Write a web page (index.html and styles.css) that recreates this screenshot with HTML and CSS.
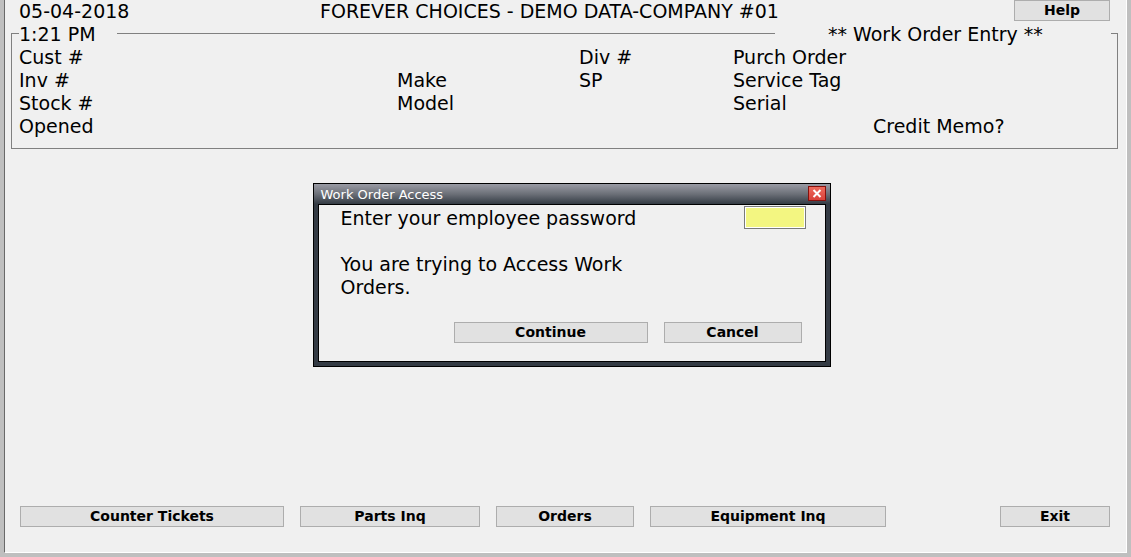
FILE: index.html
```html
<!DOCTYPE html>
<html lang="en">
<head>
<meta charset="utf-8">
<title>Work Order Entry</title>
<link rel="stylesheet" href="styles.css">
</head>
<body>
<div class="window">
  <header class="topbar">
    <span class="date">05-04-2018</span>
    <h1 class="company">FOREVER CHOICES - DEMO DATA-COMPANY #01</h1>
    <button class="btn btn-help" type="button">Help</button>
  </header>
  <section class="group">
    <div class="group-head">
      <span class="time">1:21 PM</span>
      <h2 class="title">** Work Order Entry **</h2>
    </div>
    <div class="fields">
      <span class="c1">Cust #</span><span class="c3">Div #</span><span class="c4">Purch Order</span>
      <span class="c1">Inv #</span><span class="c2">Make</span><span class="c3">SP</span><span class="c4">Service Tag</span>
      <span class="c1">Stock #</span><span class="c2">Model</span><span class="c4">Serial</span>
      <span class="c1">Opened</span><span class="c5">Credit Memo?</span>
    </div>
  </section>
  <footer class="actions">
    <button class="btn btn-tickets" type="button">Counter Tickets</button>
    <button class="btn btn-parts" type="button">Parts Inq</button>
    <button class="btn btn-orders" type="button">Orders</button>
    <button class="btn btn-equipment" type="button">Equipment Inq</button>
    <button class="btn btn-exit" type="button">Exit</button>
  </footer>
</div>
<form class="dialog" role="dialog" aria-labelledby="dialog-title">
  <div class="dialog-bar">
    <span id="dialog-title">Work Order Access</span>
    <button class="close" type="button" aria-label="Close">
      <svg width="10" height="9" viewBox="0 0 10 9" aria-hidden="true"><path d="M1.5 1L8.500 8M8.500 1L1.500 8" stroke="#fff" stroke-width="2"/></svg>
    </button>
  </div>
  <div class="dialog-body">
    <div class="password-row">
      <label for="password">Enter your employee password</label>
      <input id="password" class="password" type="password">
    </div>
    <p class="message">You are trying to Access Work<br>Orders.</p>
    <div class="dialog-actions">
      <button class="btn btn-continue" type="button">Continue</button>
      <button class="btn btn-orders" type="button">Cancel</button>
    </div>
  </div>
</form>
</body>
</html>
```
FILE: styles.css
```css
* { box-sizing: border-box; }

body {
  margin: 0;
  min-height: 100vh;
  display: flex;
  padding: 0 4px 4px;
  background: #bfbfbf;
  color: #000;
  font: 19px/23px Verdana, "DejaVu Sans", sans-serif;
  white-space: nowrap;
}

.window {
  flex: 1;
  display: flex;
  flex-direction: column;
  padding: 0 8px 25px 6px;
  background: #f0f0f0;
  border-left: 1px solid #696969;
  border-right: 1px solid #fff;
  border-bottom: 1px solid #fff;
}

h1, h2, p { margin: 0; font: inherit; }

.btn {
  height: 21px;
  padding: 0 0 1px;
  border: 1px solid #adadad;
  background: #e1e1e1;
  color: #000;
  font: bold 14px/18px Verdana, "DejaVu Sans", sans-serif;
}

.topbar {
  display: flex;
  align-items: flex-start;
  height: 33px;
  padding: 0 8px;
}
.date { flex: 301; }
.company { flex: 694; }
.btn-help { width: 96px; }

.group {
  height: 116px;
  padding: 0 6px 0 7px;
  border: 1px solid #808080;
}
.group-head {
  display: flex;
  justify-content: space-between;
  margin-top: -11px;
}
.time, .title { background: #f0f0f0; }
.time { width: 98px; }
.title { width: 336px; padding-left: 53px; }

.fields {
  display: grid;
  grid-template-columns: 378fr 182fr 154fr 140fr 238fr;
  grid-auto-rows: 23px;
}
.c1 { grid-column: 1; }
.c2 { grid-column: 2; }
.c3 { grid-column: 3; }
.c4 { grid-column: 4; }
.c5 { grid-column: 5; }

.actions {
  display: flex;
  gap: 16px;
  margin-top: auto;
  padding: 0 8px 0 9px;
}
.btn-tickets { width: 264px; }
.btn-parts { width: 180px; }
.btn-orders { width: 138px; }
.btn-equipment { width: 236px; }
.btn-exit { width: 110px; margin-left: auto; }

.dialog {
  position: absolute;
  top: 183px;
  left: calc(50% - 253px);
  width: 518px;
  padding: 0 4px 4px;
  border: 1px solid #000;
  background: #343b44;
}
.dialog-bar {
  display: flex;
  justify-content: space-between;
  height: 20px;
  margin: 0 -4px;
  padding: 2px 4px 0 7px;
  background: linear-gradient(#9a9ba5, #6c7078 50%, #343b44);
  color: #fff;
  font-size: 13px;
  line-height: 18px;
}
.close {
  display: flex;
  align-items: center;
  justify-content: center;
  width: 18px;
  height: 15px;
  padding: 0;
  border: 1px solid #86100c;
  background: linear-gradient(#ee6a5c, #d9423a);
}
.dialog-body {
  padding: 2px 19px 18px 22px;
  border: 1px solid #000;
  background: #f0f0f0;
}
.password-row {
  display: flex;
  justify-content: space-between;
  margin-bottom: 23px;
}
.password {
  width: 62px;
  height: 23px;
  margin-top: -1px;
  padding: 0;
  border: 1px solid #7a7a7a;
  background: #f3f681;
  box-shadow: inset 0 0 0 1px #fff;
}
.dialog-actions {
  display: flex;
  justify-content: flex-end;
  gap: 16px;
  padding: 23px 4px 0 0;
}
.btn-continue { width: 194px; }
```
